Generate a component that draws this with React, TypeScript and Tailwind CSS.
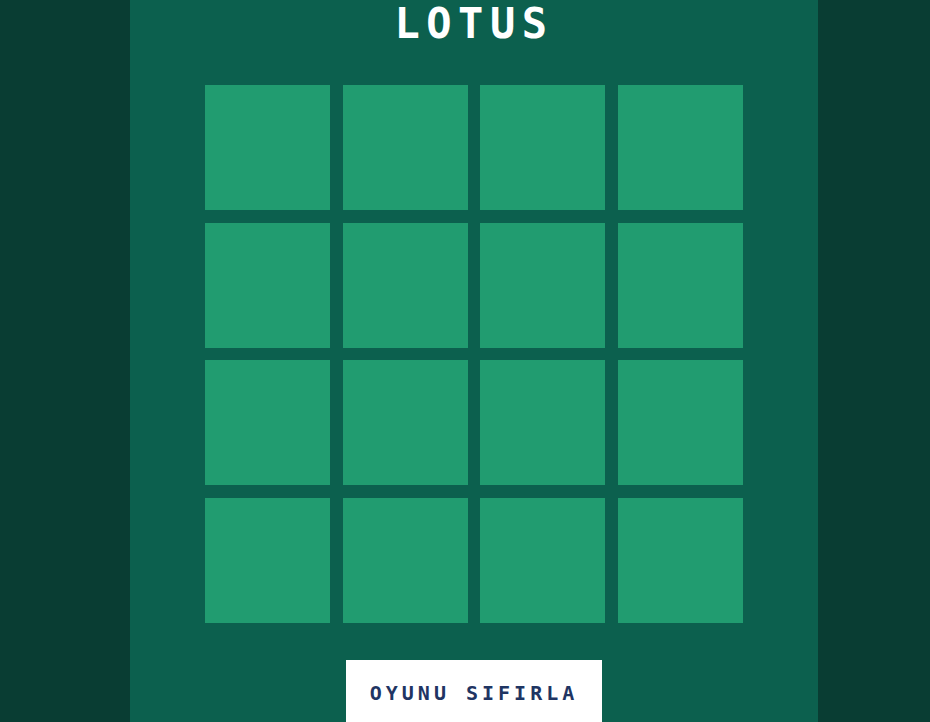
const App = () => {
  const tiles = Array.from({ length: 16 }, (_, i) => i);

  return (
    <div className="min-h-[722px] bg-[#093d33] font-['DejaVu_Sans_Mono',monospace]">
      <div className="ml-[130px] w-[688px] min-h-[722px] bg-[#0c604e] flex flex-col items-center">
        <h1 className="pt-[2px] text-white font-bold text-[42px] leading-[44px] tracking-[6.5px]">LOTUS</h1>
        <div className="mt-[39px] grid grid-cols-4 gap-[12.5px]">
          {tiles.map((t) => (
            <div key={t} className="w-[125px] h-[125px] bg-[#219c70]" />
          ))}
        </div>
        <button className="mt-[37px] w-[256px] h-[66px] bg-white text-[#1f3563] font-bold text-[20px] tracking-[4px]">
          OYUNU SIFIRLA
        </button>
      </div>
    </div>
  );
};

export default App;
